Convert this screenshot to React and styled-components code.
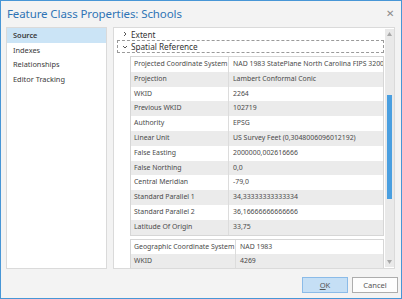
import React from "react";
import styled, { createGlobalStyle } from "styled-components";

const Global = createGlobalStyle`
  html, body { margin: 0; padding: 0; background: #f3f3f3; }
  * { box-sizing: border-box; }
  body { font-family: "Noto Sans", "Open Sans", sans-serif; }
`;

const Window = styled.div`
  width: 402px;
  height: 299px;
  border: 1px solid #4796d6;
  background: #f3f3f3;
  display: flex;
  flex-direction: column;
  overflow: hidden;
`;

const TitleBar = styled.div`
  height: 26px;
  display: flex;
  align-items: center;
  justify-content: space-between;
  padding: 0 7px 2px 6px;
`;

const Title = styled.div`
  font-size: 11.5px;
  color: #2f73b5;
  letter-spacing: -0.1px;
`;

const Close = styled.div`
  font-size: 10px;
  color: #8a8a8a;
`;

const Body = styled.div`
  height: 242px;
  display: flex;
  gap: 6px;
  padding: 0 6px 0 5px;
`;

const Nav = styled.div`
  width: 101px;
  background: #fff;
  border: 1px solid #dadada;
  display: flex;
  flex-direction: column;
`;

const NavItem = styled.div`
  height: 14.5px;
  line-height: 14.5px;
  padding-left: 6px;
  font-size: 7.4px;
  color: #3a3a3a;
  font-weight: ${(p) => (p.$active ? 600 : 400)};
  background: ${(p) => (p.$active ? "#cbe4f6" : "transparent")};
`;

const Panel = styled.div`
  flex: 1;
  background: #fff;
  border: 1px solid #dadada;
  display: flex;
  overflow: hidden;
`;

const Content = styled.div`
  flex: 1;
  padding: 0 1px 0 3px;
  overflow: hidden;
  display: flex;
  flex-direction: column;
`;

const Expander = styled.div`
  height: ${(p) => (p.$open ? 14 : 12)}px;
  display: flex;
  align-items: center;
  gap: 3px;
  padding-left: 4px;
  font-size: 8.2px;
  color: #333;
  border: 1px ${(p) => (p.$open ? "dashed #9a9a9a" : "solid transparent")};
`;

const Chevron = styled.svg`
  width: 6px;
  height: 6px;
  flex: none;
`;

const Table = styled.div`
  margin: ${(p) => p.$mt}px 0 0 13px;
  border: 1px solid #d6d6d6;
  display: grid;
  grid-template-columns: ${(p) => p.$labelWidth}px 1fr;
  flex: none;
`;

const Cell = styled.div`
  height: 14.8px;
  line-height: 14.8px;
  font-size: 6.9px;
  color: #4a4a4a;
  white-space: nowrap;
  overflow: hidden;
  padding-left: ${(p) => (p.$value ? 4 : 3)}px;
  background: ${(p) => (p.$alt ? "#ebebeb" : "#fff")};
  border-left: ${(p) => (p.$value ? "1px solid #dcdcdc" : "none")};
`;

const ScrollBar = styled.div`
  width: 9px;
  background: #e9e9e9;
  margin: 1px 0 1px 0;
  display: flex;
  flex-direction: column;
  align-items: center;
  padding: 3px 0;
`;

const Thumb = styled.div`
  width: 5px;
  height: 104px;
  background: #4a9fe0;
  margin-top: 59px;
`;

const Spacer = styled.div`
  flex: 1;
`;

const Footer = styled.div`
  flex: 1;
  display: flex;
  justify-content: flex-end;
  align-items: center;
  gap: 4px;
  padding: 3px 3px 0 0;
`;

const Button = styled.div`
  width: 46px;
  height: 16px;
  display: flex;
  align-items: center;
  justify-content: center;
  font-size: 7.6px;
  color: #555;
  background: ${(p) => (p.$primary ? "#c5dff5" : "#fdfdfd")};
  border: 1px solid ${(p) => (p.$primary ? "#8bbbe8" : "#adadad")};
`;

const projected = [
  ["Projected Coordinate System", "NAD 1983 StatePlane North Carolina FIPS 3200 Feet"],
  ["Projection", "Lambert Conformal Conic"],
  ["WKID", "2264"],
  ["Previous WKID", "102719"],
  ["Authority", "EPSG"],
  ["Linear Unit", "US Survey Feet (0,3048006096012192)"],
  ["False Easting", "2000000,002616666"],
  ["False Northing", "0,0"],
  ["Central Meridian", "-79,0"],
  ["Standard Parallel 1", "34,33333333333334"],
  ["Standard Parallel 2", "36,16666666666666"],
  ["Latitude Of Origin", "33,75"],
];

const geographic = [
  ["Geographic Coordinate System", "NAD 1983"],
  ["WKID", "4269"],
];

function PropTable({ rows, labelWidth, mt }) {
  return (
    <Table $labelWidth={labelWidth} $mt={mt}>
      {rows.map(([k, v], i) => (
        <React.Fragment key={k + i}>
          <Cell $alt={i % 2 === 1}>{k}</Cell>
          <Cell $alt={i % 2 === 1} $value>
            {v}
          </Cell>
        </React.Fragment>
      ))}
    </Table>
  );
}

function ChevronIcon({ open }) {
  return (
    <Chevron viewBox="0 0 6 6">
      {open ? (
        <path d="M1 2 L3 4 L5 2" fill="none" stroke="#444" strokeWidth="0.9" />
      ) : (
        <path d="M2 1 L4 3 L2 5" fill="none" stroke="#444" strokeWidth="0.9" />
      )}
    </Chevron>
  );
}

function Arrow({ down }) {
  return (
    <svg width="5" height="4" viewBox="0 0 5 4">
      <path d={down ? "M0 0 L5 0 L2.5 4 Z" : "M0 4 L5 4 L2.5 0 Z"} fill="#a8a8a8" />
    </svg>
  );
}

export default function App() {
  return (
    <>
      <Global />
      <Window>
        <TitleBar>
          <Title>Feature Class Properties: Schools</Title>
          <Close>✕</Close>
        </TitleBar>
        <Body>
          <Nav>
            <NavItem $active>Source</NavItem>
            <NavItem>Indexes</NavItem>
            <NavItem>Relationships</NavItem>
            <NavItem>Editor Tracking</NavItem>
          </Nav>
          <Panel>
            <Content>
              <Expander>
                <ChevronIcon />
                Extent
              </Expander>
              <Expander $open>
                <ChevronIcon open />
                Spatial Reference
              </Expander>
              <PropTable rows={projected} labelWidth={97} mt={3} />
              <PropTable rows={geographic} labelWidth={104} mt={3} />
            </Content>
            <ScrollBar>
              <Arrow />
              <Thumb />
              <Spacer />
              <Arrow down />
            </ScrollBar>
          </Panel>
        </Body>
        <Footer>
          <Button $primary>
            <u>O</u>K
          </Button>
          <Button>Cancel</Button>
        </Footer>
      </Window>
    </>
  );
}
